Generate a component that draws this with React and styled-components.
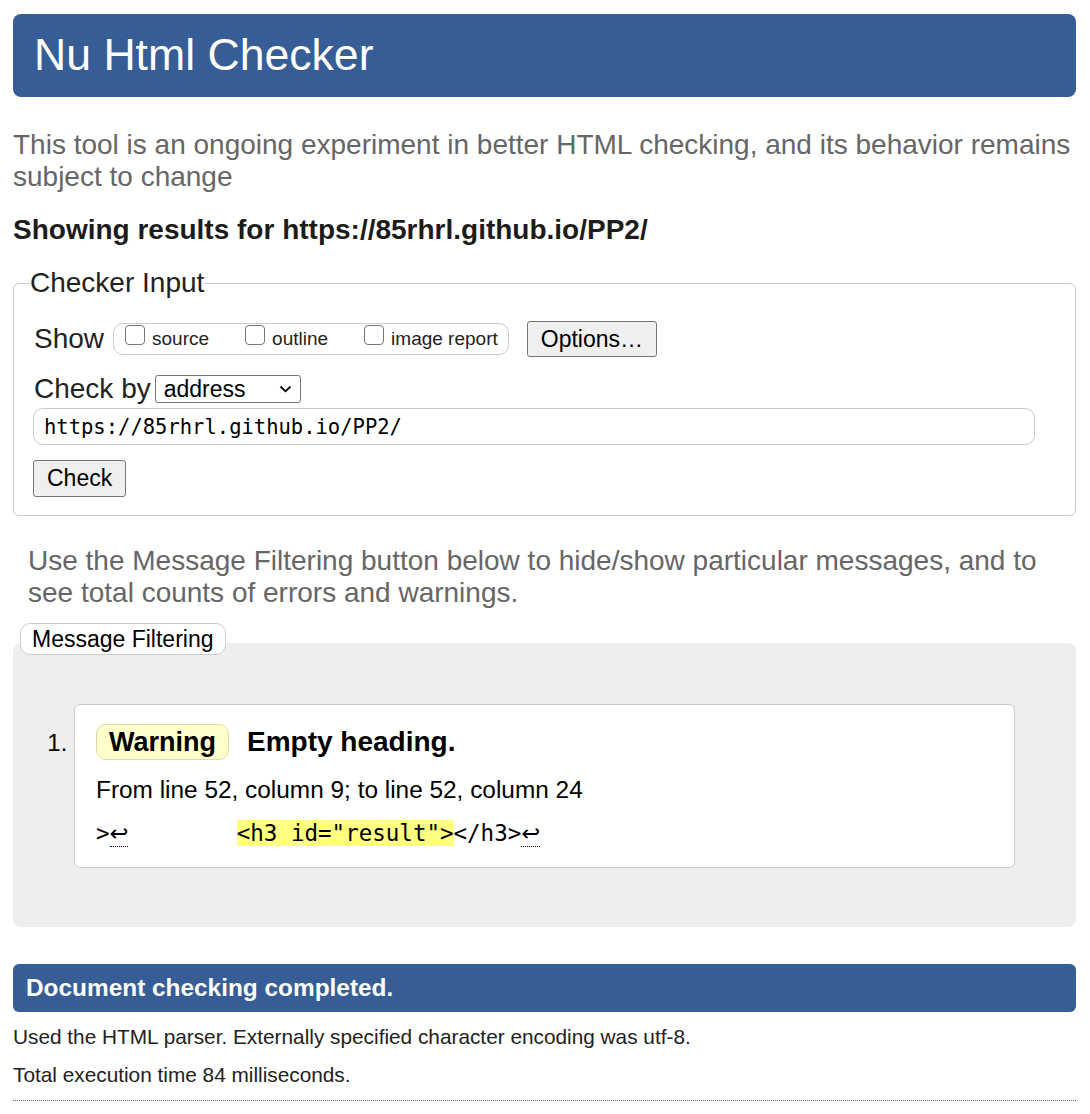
import React from 'react';
import styled, { createGlobalStyle } from 'styled-components';

const GlobalStyle = createGlobalStyle`
  html, body {
    margin: 0;
    padding: 0;
    background: #fff;
  }
  body {
    font-family: "Liberation Sans", Arial, sans-serif;
    color: #222;
  }
`;

const Page = styled.div`
  padding: 14px 14px 0 13px;
`;

const Header = styled.header`
  height: 83px;
  background: #365d95;
  border-radius: 8px;
  padding-left: 21px;
  h1 {
    margin: 0;
    font-size: 44.6px;
    font-weight: 400;
    line-height: 81px;
    color: #fff;
  }
`;

const Intro = styled.p`
  margin: 32px 0 0;
  font-size: 28px;
  line-height: 32px;
  color: #666;
`;

const ResultsFor = styled.h2`
  margin: 21px 0 0;
  font-size: 28px;
  line-height: 32px;
  font-weight: 700;
  color: #1c1c1c;
`;

const InputSet = styled.fieldset`
  margin: 21px 0 0;
  padding: 0 20px 18px;
  border: 1px solid #ccc;
  border-radius: 6px;
  legend {
    margin-left: -4px;
    padding: 0;
    font-size: 28px;
    line-height: 32px;
    color: #222;
  }
`;

const Row = styled.div`
  display: flex;
  align-items: center;
  margin-top: ${p => p.$top || 0}px;
  height: ${p => p.$h}px;
`;

const Label = styled.span`
  font-size: 28px;
  line-height: 32px;
  margin-right: ${p => p.$gap || 0}px;
`;

const ShowGroup = styled.div`
  display: flex;
  align-items: center;
  height: 30px;
  padding: 0 10px 0 11px;
  border: 1px solid #ccc;
  border-radius: 10px;
  gap: 36px;
  margin-right: 18px;
`;

const Option = styled.label`
  display: flex;
  align-items: center;
  gap: 7px;
  font-size: 19px;
  line-height: 22px;
  color: #222;
  height: 100%;
`;

const Box = styled.span`
  display: block;
  align-self: flex-start;
  margin-top: 1px;
  width: 20px;
  height: 20px;
  border: 1.5px solid #767676;
  border-radius: 4px;
  background: #fff;
  box-sizing: border-box;
`;

const Button = styled.button`
  font-family: "Liberation Sans", Arial, sans-serif;
  font-size: 23px;
  color: #000;
  height: ${p => p.$h || 36}px;
  padding: 0 ${p => p.$pad || 13}px;
  background: ${p => (p.$light ? '#fff' : '#efefef')};
  border: 1px solid ${p => (p.$light ? '#ccc' : '#767676')};
  border-radius: ${p => p.$r || 3}px;
  box-sizing: border-box;
`;

const Select = styled.div`
  display: flex;
  align-items: center;
  justify-content: space-between;
  box-sizing: border-box;
  width: 146px;
  height: 28px;
  padding: 0 8px 0 8px;
  border: 1px solid #767676;
  border-radius: 3px;
  font-size: 23px;
  color: #000;
`;

const UrlInput = styled.div`
  margin-top: 3px;
  margin-left: -1px;
  box-sizing: border-box;
  width: 1002px;
  height: 37px;
  padding: 0 10px;
  display: flex;
  align-items: center;
  border: 1px solid #ccc;
  border-radius: 10px;
  font-family: "DejaVu Sans Mono", "Liberation Mono", monospace;
  font-size: 20.5px;
  color: #000;
`;

const CheckRow = styled.div`
  margin-top: 15px;
  margin-left: -1px;
`;

const FilterNote = styled.p`
  margin: 29px 0 0;
  padding: 0 15px;
  font-size: 28px;
  line-height: 32px;
  color: #666;
`;

const FilterToggle = styled(Button)`
  position: relative;
  z-index: 1;
  margin: 14px 0 0 7px;
  display: block;
`;

const Results = styled.div`
  margin-top: -12px;
  background: #eee;
  border-radius: 8px;
  padding: 61px 61px 59px;
`;

const Messages = styled.ol`
  margin: 0;
  padding: 0;
  list-style: decimal outside;
`;

const Message = styled.li`
  font-size: 24px;
  color: #000;
  background: #fff;
  border: 1px solid #ccc;
  border-radius: 6px;
  padding: 19px 21px 19px;
`;

const MessageHead = styled.p`
  margin: 0;
  display: flex;
  align-items: center;
  gap: 18px;
  font-weight: 700;
  font-size: 28px;
  line-height: 36px;
`;

const Badge = styled.span`
  display: inline-block;
  padding: 0 12px;
  font-size: 27px;
  line-height: 34px;
  background: #ffffcc;
  border: 1px solid #ddd9a8;
  border-radius: 10px;
`;

const Location = styled.p`
  margin: 16px 0 0;
  font-size: 24.4px;
  line-height: 28px;
`;

const Extract = styled.p`
  margin: 14px 0 0;
  font-family: "DejaVu Sans Mono", "Liberation Mono", monospace;
  font-size: 22.5px;
  line-height: 30px;
  white-space: pre;
  b {
    font-family: "DejaVu Sans", sans-serif;
    font-weight: 400;
    border-bottom: 1px dotted #000;
  }
  mark {
    background: #ffff80;
    color: #000;
  }
`;

const Done = styled.h2`
  margin: 37px 0 0;
  height: 48px;
  padding-left: 13px;
  display: flex;
  align-items: center;
  background: #365d95;
  border-radius: 6px;
  color: #fff;
  font-size: 24.4px;
  font-weight: 700;
`;

const Stat = styled.p`
  margin: ${p => p.$top}px 0 0;
  font-size: 20.8px;
  line-height: 24px;
  color: #222;
`;

const Rule = styled.hr`
  margin: 13px 0 0;
  border: 0;
  border-top: 1px dotted #666;
`;

const Chevron = () => (
  <svg width="13" height="8" viewBox="0 0 13 8" fill="none">
    <path d="M1.5 1.5 L6.5 6.3 L11.5 1.5" stroke="#000" strokeWidth="1.8" />
  </svg>
);

const App = () => {
  return (
    <Page>
      <GlobalStyle />
      <Header>
        <h1>Nu Html Checker</h1>
      </Header>
      <Intro>
        This tool is an ongoing experiment in better HTML checking, and its behavior remains
        subject to change
      </Intro>
      <ResultsFor>Showing results for https://85rhrl.github.io/PP2/</ResultsFor>

      <InputSet>
        <legend>Checker Input</legend>
        <Row $top={22} $h={36}>
          <Label $gap={9}>Show</Label>
          <ShowGroup>
            <Option>
              <Box />
              source
            </Option>
            <Option>
              <Box />
              outline
            </Option>
            <Option>
              <Box />
              image report
            </Option>
          </ShowGroup>
          <Button>Options…</Button>
        </Row>
        <Row $top={16} $h={32}>
          <Label $gap={4}>Check by</Label>
          <Select>
            address
            <Chevron />
          </Select>
        </Row>
        <UrlInput>https://85rhrl.github.io/PP2/</UrlInput>
        <CheckRow>
          <Button $h={37} $pad={13}>Check</Button>
        </CheckRow>
      </InputSet>

      <FilterNote>
        Use the Message Filtering button below to hide/show particular messages, and to see
        total counts of errors and warnings.
      </FilterNote>
      <FilterToggle $light $h={32} $pad={11} $r={10}>
        Message Filtering
      </FilterToggle>
      <Results>
        <Messages>
          <Message>
            <MessageHead>
              <Badge>Warning</Badge>
              Empty heading.
            </MessageHead>
            <Location>From line 52, column 9; to line 52, column 24</Location>
            <Extract>
              {'>'}
              <b>↩</b>
              {'        '}
              <mark>{'<h3 id="result">'}</mark>
              {'</h3>'}
              <b>↩</b>
            </Extract>
          </Message>
        </Messages>
      </Results>

      <Done>Document checking completed.</Done>
      <Stat $top={13}>Used the HTML parser. Externally specified character encoding was utf-8.</Stat>
      <Stat $top={14}>Total execution time 84 milliseconds.</Stat>
      <Rule />
    </Page>
  );
};

export default App;
